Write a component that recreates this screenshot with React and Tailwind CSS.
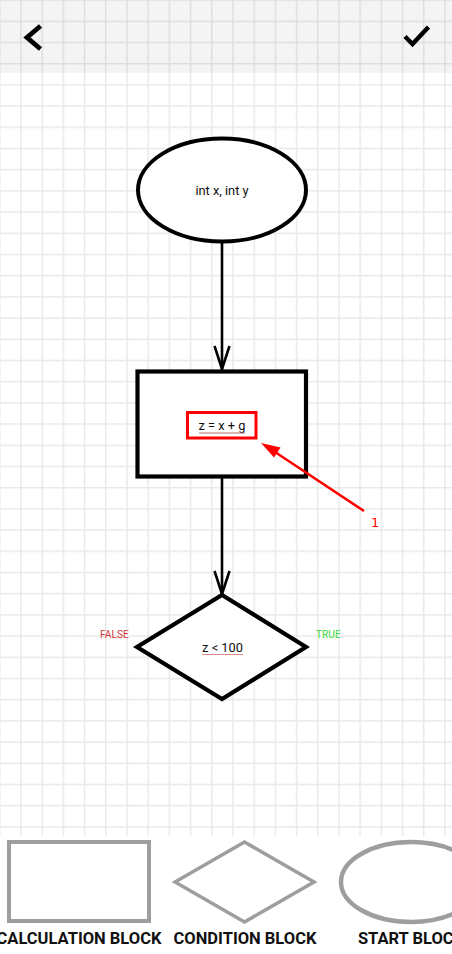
import React from "react";

const font = "Roboto, 'Noto Sans', sans-serif";

function GridBg() {
  return (
    <svg className="absolute left-0 top-0" width="452" height="836" aria-hidden="true">
      <defs>
        <pattern id="grid" x="20.2" y="20.5" width="21.2" height="21.2" patternUnits="userSpaceOnUse">
          <line x1="0.75" y1="0" x2="0.75" y2="21.2" stroke="#e9e9e9" strokeWidth="1.5" />
          <line x1="0" y1="0.75" x2="21.2" y2="0.75" stroke="#e9e9e9" strokeWidth="1.5" />
        </pattern>
      </defs>
      <rect width="452" height="836" fill="#ffffff" />
      <rect width="452" height="836" fill="url(#grid)" />
    </svg>
  );
}

function Header() {
  return (
    <div className="relative h-[73px] shrink-0 bg-black/[0.045] flex items-center justify-between pl-[22px] pr-[20px]">
      <svg width="24" height="32" viewBox="0 0 24 32">
        <polyline points="18.5,5 5,16.5 18.5,28" fill="none" stroke="#000" strokeWidth="4.8" strokeLinecap="butt" strokeLinejoin="miter" />
      </svg>
      <svg width="30" height="26" viewBox="0 0 30 26">
        <polyline points="3,12.5 10.5,20 26.5,3" fill="none" stroke="#000" strokeWidth="4.4" strokeLinecap="butt" strokeLinejoin="miter" />
      </svg>
    </div>
  );
}

function Diagram() {
  return (
    <svg width="452" height="763" viewBox="0 73 452 763" className="block" style={{ fontFamily: font }}>
      {/* connector 1 */}
      <line x1="222" y1="242" x2="222" y2="369" stroke="#000" strokeWidth="2.6" />
      <polyline points="214.5,346 222,369 229.5,346" fill="none" stroke="#000" strokeWidth="2.6" />
      {/* connector 2 */}
      <line x1="222" y1="478" x2="222" y2="594" stroke="#000" strokeWidth="2.6" />
      <polyline points="214.5,571 222,594 229.5,571" fill="none" stroke="#000" strokeWidth="2.6" />

      {/* start ellipse */}
      <ellipse cx="222" cy="190" rx="84" ry="51.5" fill="#fff" stroke="#000" strokeWidth="4" />
      <text x="222" y="195" textAnchor="middle" fontSize="12.8" fill="#111">int x, int y</text>

      {/* calculation rect */}
      <rect x="137.5" y="371.5" width="168.5" height="105" fill="#fff" stroke="#000" strokeWidth="4.2" />
      <text x="222" y="429.5" textAnchor="middle" fontSize="12.8" fill="#111">z = x + g</text>
      <line x1="199" y1="433" x2="245" y2="433" stroke="#b07070" strokeWidth="1" />
      <rect x="187.5" y="412.5" width="68.5" height="25.5" fill="none" stroke="#ff0000" strokeWidth="3" />

      {/* condition diamond */}
      <polygon points="222,595 306,647 222,699 137,647" fill="#fff" stroke="#000" strokeWidth="4.2" strokeLinejoin="miter" />
      <text x="222.5" y="652" textAnchor="middle" fontSize="12.8" fill="#111">z &lt; 100</text>
      <line x1="202" y1="654.5" x2="243" y2="654.5" stroke="#dd8888" strokeWidth="1" />
      <text x="100" y="638" fontSize="10.2" fill="#d03838">FALSE</text>
      <text x="316" y="638" fontSize="10.2" fill="#3fd83f">TRUE</text>

      {/* red annotation arrow */}
      <line x1="364" y1="511" x2="272" y2="450" stroke="#ff0000" strokeWidth="2.6" />
      <polygon points="261,443 280.5,447.5 274,457.5" fill="#ff0000" />
      <text x="371" y="526.5" fontSize="13" fill="#ff0000" style={{ fontFamily: "'DejaVu Sans', sans-serif" }}>1</text>
    </svg>
  );
}

function PaletteItem({ children, label }) {
  return (
    <div className="w-[166px] shrink-0 flex flex-col items-center">
      <div className="h-[88px] flex items-center justify-center">{children}</div>
      <div
        className="whitespace-nowrap text-[16.5px] font-bold leading-[20px] mt-[3px] text-[#111]"
        style={{ fontFamily: font }}
      >
        {label}
      </div>
    </div>
  );
}

function Palette() {
  return (
    <div className="relative h-[118px] shrink-0 bg-white overflow-hidden">
      <div className="flex pt-[2px] ml-[-4px]">
        <PaletteItem label="CALCULATION BLOCK">
          <svg width="146" height="86" viewBox="0 0 146 86">
            <rect x="3" y="3" width="140" height="79" fill="#fff" stroke="#9e9e9e" strokeWidth="4" />
          </svg>
        </PaletteItem>
        <PaletteItem label="CONDITION BLOCK">
          <svg width="146" height="86" viewBox="0 0 146 86">
            <polygon points="72.5,3 142,43 72.5,83 3,43" fill="#fff" stroke="#9e9e9e" strokeWidth="3.6" />
          </svg>
        </PaletteItem>
        <PaletteItem label="START BLOCK">
          <svg width="148" height="86" viewBox="0 0 148 86">
            <ellipse cx="74" cy="43" rx="70" ry="40" fill="#fff" stroke="#9e9e9e" strokeWidth="4.4" />
          </svg>
        </PaletteItem>
      </div>
    </div>
  );
}

export default function App() {
  return (
    <div className="relative w-[452px] h-[954px] overflow-hidden bg-white flex flex-col">
      <GridBg />
      <Header />
      <div className="relative flex-1">
        <Diagram />
      </div>
      <Palette />
    </div>
  );
}
